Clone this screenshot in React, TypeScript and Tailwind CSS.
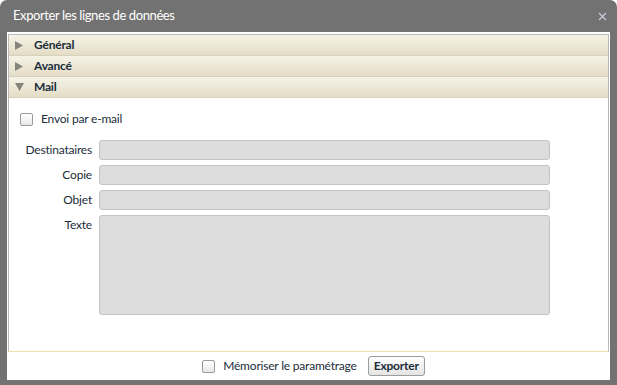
const font = { fontFamily: 'Lato, "Open Sans", sans-serif' }

function Checkbox() {
  return <span className="inline-block h-[13px] w-[13px] shrink-0 rounded-[2px] border border-[#9a9a9a] bg-gradient-to-b from-[#ffffff] to-[#e8e8e8]" />
}

function Section({ label, open }: { label: string; open?: boolean }) {
  return (
    <div className="flex h-[21px] items-center border-b border-[#d8d2bc] bg-gradient-to-b from-[#f6f3e7] to-[#e4ddc6] pl-[6px]">
      <span className="flex w-[13px] items-center">
        {open ? (
          <svg width="9" height="8" viewBox="0 0 9 8">
            <path d="M0 0H9L4.5 8Z" fill="#85857e" />
          </svg>
        ) : (
          <svg width="8" height="9" viewBox="0 0 8 9">
            <path d="M0 0L8 4.5L0 9Z" fill="#85857e" />
          </svg>
        )}
      </span>
      <span className="pl-[6px] text-[12px] font-bold tracking-[-0.2px] text-[#1b2d3b]">{label}</span>
    </div>
  )
}

function Field({ label, tall }: { label: string; tall?: boolean }) {
  return (
    <div className="flex items-start">
      <span className="w-[72px] pt-[1px] text-right text-[12px] leading-[18px] tracking-[-0.2px] text-[#1b2d3b]">{label}</span>
      <div className={`ml-[7px] w-[451px] rounded-[3px] border border-[#c3c3c3] bg-[#dddddd] ${tall ? 'h-[100px]' : 'h-[20px]'}`} />
    </div>
  )
}

export default function App() {
  return (
    <div className="h-[385px] w-[617px] overflow-hidden rounded-t-[7px] bg-[#727272] px-[7px] pb-[5px]" style={font}>
      <div className="flex h-[32px] items-center justify-between pl-[6px] pr-[3px]">
        <span className="text-[13px] tracking-[-0.4px] text-white">Exporter les lignes de données</span>
        <svg width="9" height="9" viewBox="0 0 9 9" className="mt-[1px]">
          <path d="M1 1L8 8M8 1L1 8" stroke="#c8cde0" strokeWidth="1.2" />
        </svg>
      </div>
      <div className="flex h-[348px] flex-col bg-white pt-[2px]">
        <div className="mx-[1px] flex h-[318px] flex-col border border-[#b9b9b9] border-b-[#efe0a8]">
          <Section label="Général" />
          <Section label="Avancé" />
          <Section label="Mail" open />
          <div className="flex flex-col pl-[11px] pt-[12px]">
            <label className="flex items-center gap-[8px]">
              <Checkbox />
              <span className="text-[12px] tracking-[-0.2px] text-[#1b2d3b]">Envoi par e-mail</span>
            </label>
            <div className="mt-[12px] flex flex-col gap-[5px]">
              <Field label="Destinataires" />
              <Field label="Copie" />
              <Field label="Objet" />
              <Field label="Texte" tall />
            </div>
          </div>
        </div>
        <div className="flex flex-1 items-center justify-center gap-[8px] pl-[10px]">
          <Checkbox />
          <span className="text-[12px] tracking-[-0.2px] text-[#1b2d3b]">Mémoriser le paramétrage</span>
          <button className="ml-[3px] h-[20px] rounded-[3px] border border-[#9c9c9c] bg-gradient-to-b from-[#ffffff] to-[#e4e4e4] px-[5px] text-[12px] font-bold tracking-[-0.2px] text-[#1b2d3b]">
            Exporter
          </button>
        </div>
      </div>
    </div>
  )
}
